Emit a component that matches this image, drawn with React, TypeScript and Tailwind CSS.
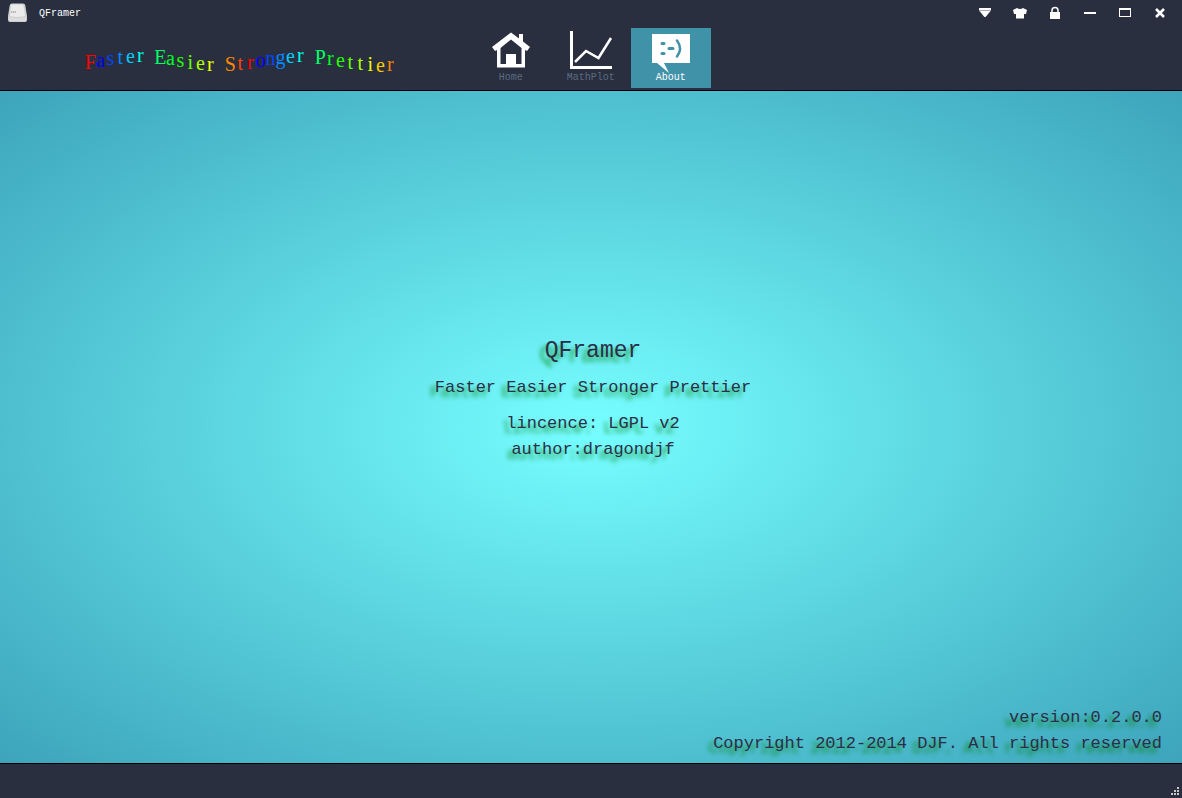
import type { CSSProperties, ReactNode } from "react";

const WAVE = [0, 38, 71, 92, 100, 92, 71, 38, 0, -38, -71, -92, -100, -92, -71, -38];

function WavyText({ text }: { text: string }) {
  return (
    <p className="flex font-['Liberation_Serif',serif] text-[20px] leading-5" aria-label={text}>
      {Array.from(text).map((ch, i) => {
        const step = (i + 15) % 16;
        const style: CSSProperties = {
          color: `hsl(${(15 - step) * 16} 100% 50%)`,
          transform: `translateY(${Math.round(-WAVE[step] / 21)}px)`,
        };
        return (
          <span key={i} className="flex w-[10px] justify-center whitespace-pre" style={style}>
            {ch}
          </span>
        );
      })}
    </p>
  );
}

function WindowButton({ label, children }: { label: string; children: ReactNode }) {
  return (
    <button type="button" aria-label={label} className="flex h-[25px] w-[35px] items-center justify-center text-white">
      <svg width="14" height="14" viewBox="0 0 14 14" fill="currentColor">
        {children}
      </svg>
    </button>
  );
}

function NavButton({ label, active = false, children }: { label: string; active?: boolean; children: ReactNode }) {
  return (
    <button
      type="button"
      aria-current={active ? "page" : undefined}
      className={
        active
          ? "flex h-[60px] w-20 flex-col items-center bg-[#3f92a8] text-white"
          : "flex h-[60px] w-20 flex-col items-center text-[#5c6b80]"
      }
    >
      <svg width="48" height="44" viewBox="0 0 48 44" className="overflow-visible text-white">
        {children}
      </svg>
      <span className="text-[10px] leading-3">{label}</span>
    </button>
  );
}

export default function App() {
  return (
    <div className="flex min-h-screen flex-col bg-[#292f3f] font-['Liberation_Mono',monospace] text-[#2b2f45]">
      <header className="border-b border-black">
        <div className="flex h-7 items-start justify-between pr-[5px] pl-2">
          <div className="flex h-[25px] items-center gap-3 text-white">
            <svg width="19" height="20" viewBox="0 0 19 20">
              <path d="M4 0.500h11q2 0 2.300 2L19 13v4q0 2-2 2H2q-2 0-2-2v-4L1.700 2.500Q2 0.500 4 0.500z" fill="#cfcfcf" />
              <path d="M4 1.500h10q1.500 0 1.500 1.500L17 13Q9 15 2 13L3 3q0-1.500 1-1.500z" fill="#ebebeb" />
              <path d="M1 14q8 2 17 0v3q0 1-1 1H2q-1 0-1-1z" fill="#dcdcdc" />
              <path d="M3 9h5" stroke="#aaa" strokeWidth="1.500" strokeDasharray="1.500 0.500" />
            </svg>
            <h1 className="pt-0.5 text-[10px] leading-3">QFramer</h1>
          </div>
          <div className="flex">
            <WindowButton label="Menu">
              <path d="M1 2h12v2H1z" />
              <path d="M1 4h12v1H1z" opacity="0.6" />
              <path d="M1.500 5h11L8 10.500q-1 1-2 0z" />
            </WindowButton>
            <WindowButton label="Skin">
              <path d="M4 2q3 2 6 0l4 2-1 4h-2v4.500H3V8H1L0 4z" />
            </WindowButton>
            <WindowButton label="Lock">
              <path d="M2 6h10v7H2z" />
              <path d="M4 7V4.500q0-3 3-3t3 3V7" fill="none" stroke="currentColor" strokeWidth="1.500" />
            </WindowButton>
            <WindowButton label="Minimize">
              <path d="M1 6h12v2H1z" />
            </WindowButton>
            <WindowButton label="Maximize">
              <path d="M1 2h12v9H1zM2 4v6h10V4z" fillRule="evenodd" />
            </WindowButton>
            <WindowButton label="Close">
              <path d="M3 3l8 8M11 3l-8 8" stroke="currentColor" strokeWidth="2.500" />
            </WindowButton>
          </div>
        </div>
        <div className="flex h-[62px]">
          <div className="flex w-2/5 items-center justify-center pt-0.5 pl-2">
            <WavyText text="Faster Easier Stronger Prettier" />
          </div>
          <nav className="-ml-0.5 flex">
            <NavButton label="Home">
              <path
                d="M5 19L24 4.500l8 6V6h4v7.500L43 19l-3 4-2-1v17.500H10V22l-2 1zM13.500 20v16H19V26h10v10h5.500V20L24 11.500z"
                fill="currentColor"
                fillRule="evenodd"
              />
            </NavButton>
            <NavButton label="MathPlot">
              <path d="M4.500 3v36.500H45" fill="none" stroke="currentColor" strokeWidth="3" />
              <path d="M8 34l11-11 12.500 7L44 10" fill="none" stroke="currentColor" strokeWidth="2.500" />
            </NavButton>
            <NavButton label="About" active>
              <path d="M5 6h38v29H17l5 10L10 35H5z" fill="currentColor" />
              <g stroke="#3f92a8" fill="none" strokeWidth="3" strokeLinecap="round">
                <path d="M15 15.500h2M15 25.500h2M22 20.500h4" />
                <path d="M30 12.500q6 8 0 16" strokeWidth="2.500" />
              </g>
            </NavButton>
          </nav>
        </div>
      </header>

      <main className="flex flex-1 flex-col bg-[radial-gradient(ellipse_farthest-corner_at_center,#76feff,#3da4bb)] px-5 pb-1.5 [text-shadow:-5px_5px_4px_#008000b0]">
        <div className="flex flex-1 flex-col items-center justify-center pt-0.5 pl-1 text-center text-[17px] leading-[26px]">
          <h2 className="mb-2 text-[23px] leading-8">QFramer</h2>
          <p className="mb-2.5">Faster Easier Stronger Prettier</p>
          <p>lincence: LGPL v2</p>
          <p>author:dragondjf</p>
        </div>
        <div className="text-right text-[17px] leading-[26px]">
          <p>version:0.2.0.0</p>
          <p>Copyright 2012-2014 DJF. All rights reserved</p>
        </div>
      </main>

      <footer className="flex h-[35px] items-end justify-end border-t border-black p-[3px]">
        <svg width="8" height="8" viewBox="0 0 8 8" fill="#c8c8c8">
          <path d="M6 0h2v2H6zM3 3h2v2H3zM6 3h2v2H6zM0 6h2v2H0zM3 6h2v2H3zM6 6h2v2H6z" />
        </svg>
      </footer>
    </div>
  );
}
